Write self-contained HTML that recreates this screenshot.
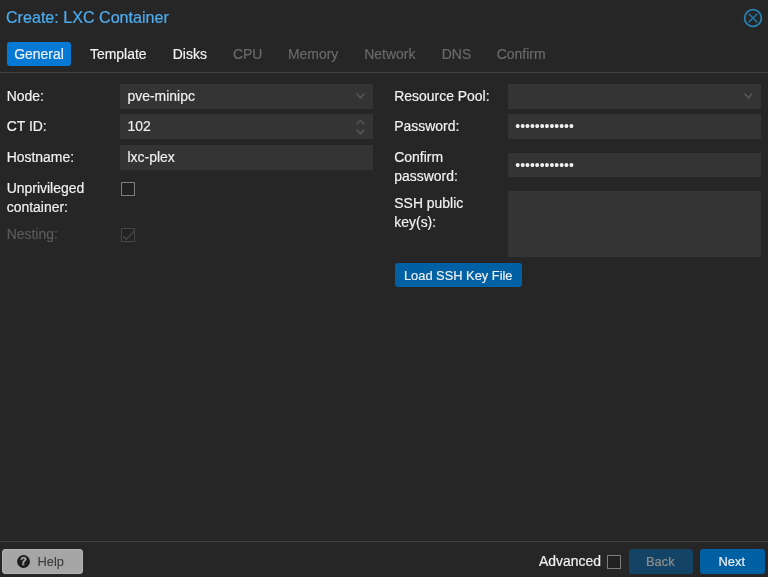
<!DOCTYPE html>
<html>
<head>
<meta charset="utf-8">
<title>Create: LXC Container</title>
<style>
html,body{margin:0;padding:0;}
body{width:768px;height:577px;overflow:hidden;background:#262626;font-family:"Liberation Sans",Arial,Helvetica,sans-serif;font-size:13.95px;color:#f2f2f2;position:relative;}
.abs{position:absolute;white-space:nowrap;-webkit-text-stroke:0.18px currentColor;}
#w{position:absolute;left:0;top:0;width:768px;height:577px;filter:blur(0.3px);}
.title{left:6px;top:8px;font-size:16.1px;color:#4eabee;line-height:19px;-webkit-text-stroke:0.22px #4eabee;}
.tab{top:42.1px;height:24px;line-height:25.6px;font-size:13.95px;color:#f2f2f2;}
.tab.active{background:#0679d4;border-radius:3px;left:7px;width:64px;text-align:center;}
.tab.dis{color:#6a6a6a;}
.hline{left:0;width:768px;height:1px;background:#3f3f3f;}
.lbl{line-height:18.7px;color:#f2f2f2;}
.lbl.dis{color:#5a5a5a;}
.inp{background:#343434;height:24.5px;line-height:25.2px;box-sizing:border-box;padding-left:7.7px;color:#f2f2f2;}
.g{opacity:.99;display:inline-block;}
.cb{width:14.4px;height:14.1px;box-sizing:border-box;border:1.6px solid #7e7e7e;border-radius:0.5px;background:#212121;}
.cb.dis{border-color:#474747;background:#232323;}
.btn{background:#0060a4;border-radius:3px;color:#f2f2f2;font-size:12.85px;text-align:center;box-sizing:border-box;}
svg{position:absolute;overflow:visible;}
</style>
</head>
<body>
<div id="w">
<div class="abs title">Create: LXC Container</div>
<svg style="left:742.9px;top:8px" width="20" height="20" viewBox="0 0 20 20"><circle cx="10" cy="10" r="8.4" fill="none" stroke="#2785b6" stroke-width="1.7"/><path d="M5.7 5.7 L14.3 14.3 M14.3 5.7 L5.7 14.3" stroke="#2179aa" stroke-width="1.5" fill="none"/></svg>

<div class="abs tab active"><span class="g">General</span></div>
<div class="abs tab" style="left:90px">Template</div>
<div class="abs tab" style="left:172.8px">Disks</div>
<div class="abs tab dis" style="left:233px">CPU</div>
<div class="abs tab dis" style="left:288px">Memory</div>
<div class="abs tab dis" style="left:364.3px">Network</div>
<div class="abs tab dis" style="left:441.8px">DNS</div>
<div class="abs tab dis" style="left:496.8px">Confirm</div>
<div class="abs hline" style="top:72px"></div>

<!-- left column -->
<div class="abs lbl" style="left:6.7px;top:87.2px">Node:</div>
<div class="abs inp" style="left:119.8px;top:84.2px;width:253.4px;height:24.7px"><span class="g">pve-minipc</span></div>
<svg style="left:356.4px;top:93px" width="9" height="6" viewBox="0 0 9 6"><path d="M0.5 0.6 L4.4 4.8 L8.3 0.6" stroke="#575757" stroke-width="1.5" fill="none"/></svg>

<div class="abs lbl" style="left:6.7px;top:117.4px">CT ID:</div>
<div class="abs inp" style="left:119.8px;top:114.2px;width:253.4px;height:24.9px"><span class="g">102</span></div>
<svg style="left:356.4px;top:119px" width="9" height="16" viewBox="0 0 9 16"><path d="M0.5 5.5 L4.4 1.3 L8.3 5.5 M0.5 10.6 L4.4 14.8 L8.3 10.6" stroke="#575757" stroke-width="1.5" fill="none"/></svg>

<div class="abs lbl" style="left:6.7px;top:147.8px">Hostname:</div>
<div class="abs inp" style="left:119.8px;top:144.8px;width:253.4px;height:25.2px"><span class="g">lxc-plex</span></div>

<div class="abs lbl" style="left:6.7px;top:178.9px;white-space:normal;width:100px">Unprivileged container:</div>
<div class="abs cb" style="left:120.9px;top:181.8px"></div>

<div class="abs lbl dis" style="left:6.7px;top:225.4px">Nesting:</div>
<div class="abs cb dis" style="left:120.9px;top:227.9px"></div>
<svg style="left:121px;top:228px" width="14.5" height="14" viewBox="0 0 14.5 14"><path d="M2.2 8.2 L5.4 11.2 L13.2 3" stroke="#474747" stroke-width="1.5" fill="none"/></svg>

<!-- right column -->
<div class="abs lbl" style="left:394.3px;top:87.2px">Resource Pool:</div>
<div class="abs inp" style="left:507.6px;top:84.2px;width:253.4px;height:24.7px"></div>
<svg style="left:743.8px;top:93px" width="9" height="6" viewBox="0 0 9 6"><path d="M0.5 0.6 L4.4 4.8 L8.3 0.6" stroke="#575757" stroke-width="1.5" fill="none"/></svg>

<div class="abs lbl" style="left:394.3px;top:117.4px">Password:</div>
<div class="abs inp" style="left:507.6px;top:114.2px;width:253.4px;height:24.9px;-webkit-text-stroke:0"><span class="g">••••••••••••</span></div>

<div class="abs lbl" style="left:394.3px;top:148.4px;white-space:normal;width:100px">Confirm password:</div>
<div class="abs inp" style="left:507.6px;top:152.6px;width:253.4px;height:24.9px;-webkit-text-stroke:0"><span class="g">••••••••••••</span></div>

<div class="abs lbl" style="left:394.3px;top:194.4px;white-space:normal;width:100px">SSH public key(s):</div>
<div class="abs inp" style="left:507.6px;top:191px;width:253.4px;height:65.8px"></div>

<div class="abs btn" style="left:394.7px;top:262.8px;width:127.7px;height:24.4px;line-height:25.5px;padding-right:0.6px"><span class="g">Load SSH Key File</span></div>

<!-- bottom bar -->
<div class="abs hline" style="top:541px"></div>
<div class="abs btn" style="left:2px;top:548.8px;width:80.8px;height:25.3px;line-height:25.3px;background:#a6a6a6;color:#3a3a3a;border:1px solid #b3b3b3;text-align:left"><span style="position:absolute;left:34.5px;top:-1px;font-size:12.85px;-webkit-text-stroke:0.1px #3a3a3a;opacity:.99">Help</span></div>
<svg style="left:17px;top:554.8px" width="13" height="13" viewBox="0 0 13 13"><circle cx="6.5" cy="6.5" r="6.4" fill="#1c1c1c"/><text x="6.5" y="10.3" text-anchor="middle" font-family="Liberation Sans, sans-serif" font-weight="bold" font-size="10.8" fill="#a6a6a6" stroke="#a6a6a6" stroke-width="0.45">?</text></svg>

<div class="abs lbl" style="left:539px;top:552.3px">Advanced</div>
<div class="abs cb" style="left:606.5px;top:554.8px;width:14.3px;height:14px"></div>
<div class="abs btn" style="left:628.6px;top:548.8px;width:64.4px;height:25px;line-height:25px;padding-right:1px;opacity:.5"><span class="g">Back</span></div>
<div class="abs btn" style="left:699.9px;top:548.8px;width:64.8px;height:25px;line-height:25px;padding-right:1px"><span class="g">Next</span></div>
</div>
</body>
</html>
